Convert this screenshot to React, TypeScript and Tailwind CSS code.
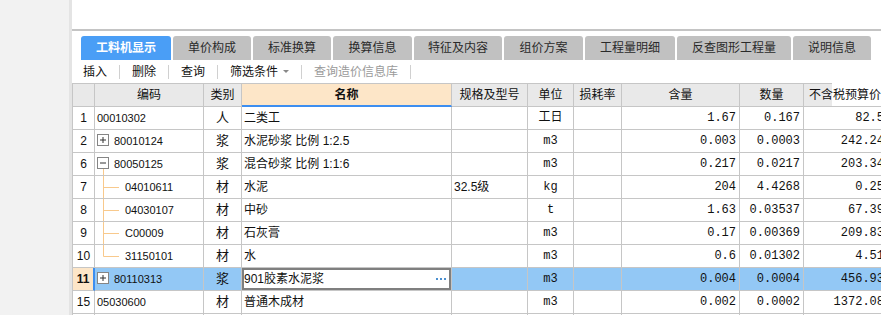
import React from 'react';

type Tree = 'none' | 'plus' | 'minus' | 'child' | 'last';

const tabs = [
  { label: '工料机显示', w: 'w-[90px]', active: true },
  { label: '单价构成', w: 'w-[78px]' },
  { label: '标准换算', w: 'w-[78px]' },
  { label: '换算信息', w: 'w-[79px]' },
  { label: '特征及内容', w: 'w-[88px]' },
  { label: '组价方案', w: 'w-[79px]' },
  { label: '工程量明细', w: 'w-[90px]' },
  { label: '反查图形工程量', w: 'w-[114px]' },
  { label: '说明信息', w: 'w-[78px]' },
];

const rows: {
  n: string;
  code: string;
  tree: Tree;
  type: string;
  name: string;
  spec?: string;
  unit: string;
  qty: string;
  amt: string;
  price: string;
  selected?: boolean;
}[] = [
  { n: '1', code: '00010302', tree: 'none', type: '人', name: '二类工', unit: '工日', qty: '1.67', amt: '0.167', price: '82.5' },
  { n: '2', code: '80010124', tree: 'plus', type: '浆', name: '水泥砂浆 比例 1:2.5', unit: 'm3', qty: '0.003', amt: '0.0003', price: '242.24' },
  { n: '6', code: '80050125', tree: 'minus', type: '浆', name: '混合砂浆 比例 1:1:6', unit: 'm3', qty: '0.217', amt: '0.0217', price: '203.34' },
  { n: '7', code: '04010611', tree: 'child', type: '材', name: '水泥', spec: '32.5级', unit: 'kg', qty: '204', amt: '4.4268', price: '0.25' },
  { n: '8', code: '04030107', tree: 'child', type: '材', name: '中砂', unit: 't', qty: '1.63', amt: '0.03537', price: '67.39' },
  { n: '9', code: 'C00009', tree: 'child', type: '材', name: '石灰膏', unit: 'm3', qty: '0.17', amt: '0.00369', price: '209.83' },
  { n: '10', code: '31150101', tree: 'last', type: '材', name: '水', unit: 'm3', qty: '0.6', amt: '0.01302', price: '4.51' },
  { n: '11', code: '80110313', tree: 'plus', type: '浆', name: '901胶素水泥浆', unit: 'm3', qty: '0.004', amt: '0.0004', price: '456.93', selected: true },
  { n: '15', code: '05030600', tree: 'none', type: '材', name: '普通木成材', unit: 'm3', qty: '0.002', amt: '0.0002', price: '1372.08' },
];

const cell =
  'h-[23px] shrink-0 box-border border-r border-b border-[#c6c6c6] flex items-center overflow-hidden whitespace-nowrap';
const mono = "[font-family:'Liberation_Mono','Noto_Sans_CJK_SC',monospace]";

function TreeMark({ tree }: { tree: Tree }) {
  if (tree === 'plus' || tree === 'minus') {
    return (
      <svg width="16" height="22" className="shrink-0">
        <rect x="2.5" y="4.5" width="11" height="11" fill="#fff" stroke="#858585" />
        <line x1="5" y1="10" x2="11" y2="10" stroke="#333" />
        {tree === 'plus' && <line x1="8" y1="7" x2="8" y2="13" stroke="#333" />}
        {tree === 'minus' && <line x1="8.5" y1="16" x2="8.5" y2="22" stroke="#f8c98c" />}
      </svg>
    );
  }
  if (tree === 'child' || tree === 'last') {
    return (
      <svg width="28" height="22" className="shrink-0">
        <line x1="8.5" y1="0" x2="8.5" y2={tree === 'last' ? 11.5 : 22} stroke="#f8c98c" />
        <line x1="8.5" y1="11.5" x2="24" y2="11.5" stroke="#f8c98c" />
      </svg>
    );
  }
  return null;
}

function Sep() {
  return <span className="mx-3 h-[14px] w-px bg-[#d0d0d0]" />;
}

export default function App() {
  return (
    <div className="w-[881px] h-[315px] overflow-hidden flex bg-white text-[12px] text-[#111] [font-family:'Liberation_Sans','Noto_Sans_CJK_SC',sans-serif]">
      {/* left rail */}
      <div className="w-[72px] shrink-0 bg-[#f2f2f2] border-r-[3px] border-[#e4e4e4]" />

      <div className="flex-1 min-w-0 flex flex-col overflow-hidden">
        <div className="h-[29px] shrink-0" />
        <div className="h-[2px] shrink-0 bg-[#c4c4c4]" />

        {/* tabs */}
        <div className="flex gap-[2px] pl-[9px] pt-[5px] shrink-0">
          {tabs.map((t) => (
            <div
              key={t.label}
              className={`${t.w} h-[24px] rounded-t-[3px] flex items-center justify-center ${
                t.active ? 'bg-[#4a9ef6] text-white font-bold' : 'bg-[#c1c1c1] text-[#2a2a2a]'
              }`}
            >
              {t.label}
            </div>
          ))}
        </div>

        {/* toolbar */}
        <div className="h-[23px] shrink-0 flex items-center pl-[11px]">
          <span>插入</span>
          <Sep />
          <span>删除</span>
          <Sep />
          <span>查询</span>
          <Sep />
          <span>筛选条件</span>
          <span className="ml-[5px] w-0 h-0 border-l-[3px] border-r-[3px] border-t-[3px] border-l-transparent border-r-transparent border-t-[#888]" />
          <Sep />
          <span className="text-[#9a9a9a]">查询造价信息库</span>
          <Sep />
        </div>

        {/* grid */}
        <div className="border-t border-l border-[#c6c6c6] w-[760px]">
          <div className="flex bg-[#e9e9e9]">
            <div className={`${cell} w-[22px]`} />
            <div className={`${cell} w-[109px] justify-center`}>编码</div>
            <div className={`${cell} w-[38px] justify-center`}>类别</div>
            <div className={`${cell} w-[210px] justify-center bg-[#fde6c8] font-bold border-b-2 border-b-[#3d8ef0]`}>名称</div>
            <div className={`${cell} w-[76px] justify-center`}>规格及型号</div>
            <div className={`${cell} w-[46px] justify-center`}>单位</div>
            <div className={`${cell} w-[48px] justify-center`}>损耗率</div>
            <div className={`${cell} w-[118px] justify-center`}>含量</div>
            <div className={`${cell} w-[64px] justify-center`}>数量</div>
            <div className={`${cell} w-[120px] pl-[5px]`}>不含税预算价</div>
          </div>

          {rows.map((r) => {
            const bg = r.selected ? 'bg-[#93c8f5]' : '';
            return (
              <div key={r.n} className="flex">
                <div
                  className={`${cell} w-[22px] justify-center ${
                    r.selected ? 'bg-[#fde6c8] font-bold border-r-2 border-r-[#3d8ef0]' : ''
                  }`}
                >
                  {r.n}
                </div>
                <div className={`${cell} w-[109px] text-[11px] ${bg} ${r.tree === 'none' ? 'pl-[2px]' : ''}`}>
                  <TreeMark tree={r.tree} />
                  <span className={r.tree === 'plus' || r.tree === 'minus' ? 'ml-[3px]' : r.tree === 'none' ? '' : 'ml-[2px]'}>
                    {r.code}
                  </span>
                </div>
                <div className={`${cell} w-[38px] justify-center text-[13px] ${bg}`}>{r.type}</div>
                {r.selected ? (
                  <div className={`${cell} w-[210px] pl-[2px] bg-white shadow-[inset_0_0_0_2px_#7f7f7f] justify-between pr-[5px]`}>
                    <span>{r.name}</span>
                    <span className="flex gap-[2px]">
                      <span className="w-[2px] h-[2px] bg-[#4a8fd0]" />
                      <span className="w-[2px] h-[2px] bg-[#4a8fd0]" />
                      <span className="w-[2px] h-[2px] bg-[#4a8fd0]" />
                    </span>
                  </div>
                ) : (
                  <div className={`${cell} w-[210px] pl-[2px] ${bg}`}>{r.name}</div>
                )}
                <div className={`${cell} w-[76px] pl-[2px] ${bg}`}>{r.spec ?? ''}</div>
                <div className={`${cell} w-[46px] justify-center ${mono} ${bg}`}>{r.unit}</div>
                <div className={`${cell} w-[48px] ${bg}`} />
                <div className={`${cell} w-[118px] justify-end pr-[3px] ${mono} ${bg}`}>{r.qty}</div>
                <div className={`${cell} w-[64px] justify-end pr-[3px] ${mono} ${bg}`}>{r.amt}</div>
                <div className={`${cell} w-[84px] justify-end pr-[3px] ${mono} ${bg}`}>{r.price}</div>
              </div>
            );
          })}
          <div className="flex">
            <div className={`${cell} w-[22px]`} />
            <div className={`${cell} w-[109px]`} />
            <div className={`${cell} w-[38px]`} />
            <div className={`${cell} w-[210px]`} />
            <div className={`${cell} w-[76px]`} />
            <div className={`${cell} w-[46px]`} />
            <div className={`${cell} w-[48px]`} />
            <div className={`${cell} w-[118px]`} />
            <div className={`${cell} w-[64px]`} />
            <div className={`${cell} w-[84px]`} />
          </div>
        </div>
      </div>
    </div>
  );
}
